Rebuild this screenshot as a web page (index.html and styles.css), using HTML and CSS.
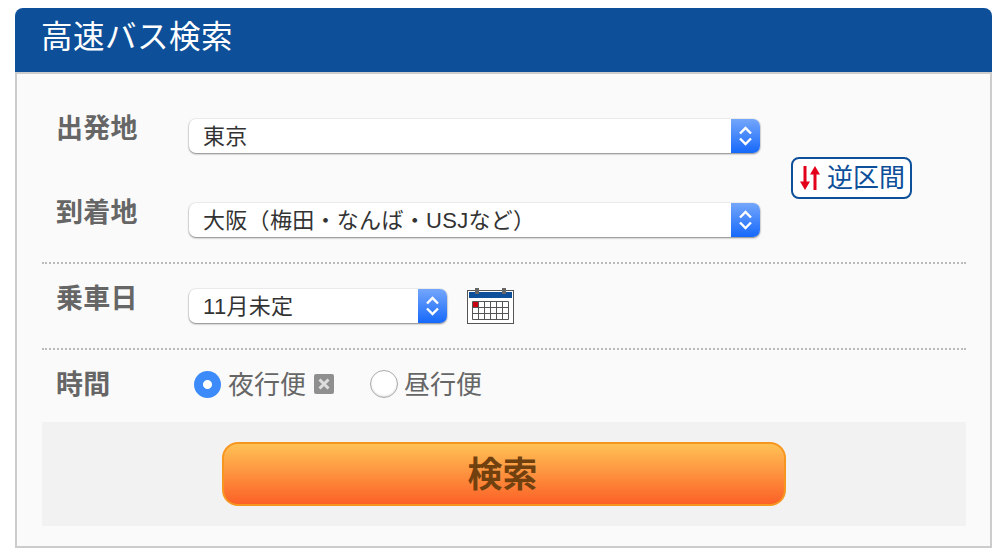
FILE: index.html
```html
<!DOCTYPE html>
<html lang="ja">

<head>
  <meta charset="UTF-8" />
  <title>高速バス検索</title>
  <link rel="stylesheet" href="styles.css">
</head>

<body>
  <div class="search">
    <h2 class="search-title">高速バス検索</h2>
    <div class="search-body">
      <div class="route">
        <div class="label">出発地</div>
        <div class="select">
          <span class="select-text">東京</span>
          <span class="select-arrow">
            <svg width="15" height="22" viewBox="0 0 15 22"><path d="M2 8.5 7.5 3 13 8.5M2 13.5 7.5 19 13 13.5" fill="none" stroke="#fff" stroke-width="2.4"/></svg>
          </span>
        </div>
        <a class="swap">
          <svg width="22" height="26" viewBox="0 0 22 26"><path d="M6 1v20M1 16.500 6 25l5-8.500zM16 25V5M11 9.500 16 1l5 8.500z" fill="#e2001a"/><path d="M6 1v20M16 25V5" stroke="#e2001a" stroke-width="3"/></svg>
          <span class="swap-text">逆区間</span>
        </a>
        <div class="label">到着地</div>
        <div class="select">
          <span class="select-text">大阪（梅田・なんば・USJなど）</span>
          <span class="select-arrow">
            <svg width="15" height="22" viewBox="0 0 15 22"><path d="M2 8.5 7.5 3 13 8.5M2 13.5 7.5 19 13 13.5" fill="none" stroke="#fff" stroke-width="2.4"/></svg>
          </span>
        </div>
      </div>

      <div class="date">
        <div class="label">乗車日</div>
        <div class="select select-short">
          <span class="select-text">11月未定</span>
          <span class="select-arrow">
            <svg width="15" height="22" viewBox="0 0 15 22"><path d="M2 8.5 7.5 3 13 8.5M2 13.5 7.5 19 13 13.5" fill="none" stroke="#fff" stroke-width="2.4"/></svg>
          </span>
        </div>
        <svg class="calendar" width="47" height="36" viewBox="0 0 47 36">
          <rect x="0.500" y="2.500" width="46" height="33" fill="#fff" stroke="#555"/>
          <rect x="2" y="4" width="43" height="6" fill="#0d4f99"/>
          <rect x="8" y="0" width="4" height="6" fill="#666"/>
          <rect x="35" y="0" width="4" height="6" fill="#666"/>
          <path d="M5.500 13.500h36v18h-36zM5.500 19.500h36M5.500 25.500h36M11.500 13.500v18M17.500 13.500v18M23.500 13.500v18M29.500 13.500v18M35.500 13.500v18" fill="none" stroke="#555"/>
          <rect x="6" y="14" width="5" height="5" fill="#c8000f"/>
        </svg>
      </div>

      <div class="time">
        <div class="label label-time">時間</div>
        <div class="radios">
          <span class="radio radio-on"></span>
          <span class="radio-text">夜行便</span>
          <span class="close-icon">
            <svg width="12" height="12" viewBox="0 0 12 12"><path d="M1.500 1.500l9 9M10.500 1.500l-9 9" stroke="#ddd" stroke-width="3"/></svg>
          </span>
          <span class="radio radio-off"></span>
          <span class="radio-text">昼行便</span>
        </div>
      </div>

      <div class="search-footer">
        <button class="search-btn">検索</button>
      </div>
    </div>
  </div>
</body>

</html>
```

FILE: styles.css
```css
* {
  box-sizing: border-box;
}

body {
  margin: 0;
  padding: 8px 14px 0 15px;
  background: #fff;
  font-family: "Liberation Sans", "Noto Sans CJK JP", sans-serif;
}

.search-title {
  margin: 0;
  height: 64px;
  padding-left: 26px;
  background: #0d4f99;
  border-radius: 8px 8px 0 0;
  color: #fff;
  font-size: 31.500px;
  font-weight: normal;
  line-height: 59px;
  letter-spacing: 0.500px;
}

.search-body {
  padding: 0 24px 20px 25px;
  background: #fafafa;
  border: 2px solid #ccc;
}

.label {
  padding-left: 14px;
  color: #666;
  font-size: 27px;
  font-weight: bold;
  line-height: 20px;
  letter-spacing: 0.300px;
}

.route {
  display: grid;
  grid-template-columns: 147px 571px auto;
  row-gap: 50px;
  padding: 45px 0 25px;
  border-bottom: 2px dotted #bbb;
}

.swap {
  grid-column: 3;
  grid-row: 1 / span 2;
  align-self: center;
  justify-self: start;
  display: flex;
  align-items: center;
  gap: 6px;
  width: 121px;
  height: 42px;
  margin-left: 31px;
  padding-left: 6px;
  background: #fff;
  border: 2px solid #0d4f99;
  border-radius: 8px;
  color: #0d4f99;
  font-size: 26px;
}

.swap-text {
  padding-bottom: 6px;
}

.select {
  display: flex;
  height: 34px;
  background: #fff;
  border-radius: 7px;
  box-shadow: 0 0 0 1px rgba(0, 0, 0, 0.04), 0 1px 2px rgba(0, 0, 0, 0.45);
  overflow: hidden;
}

.select-short {
  width: 258px;
}

.select-text {
  flex: 1;
  padding-left: 14px;
  color: #333;
  font-size: 22px;
  line-height: 35px;
  letter-spacing: 0.300px;
  white-space: nowrap;
}

.select-arrow {
  display: flex;
  align-items: center;
  justify-content: center;
  width: 29px;
  background: linear-gradient(#74a6fb, #1669fb);
}

.date {
  display: flex;
  align-items: flex-start;
  padding: 25px 0 24px;
  border-bottom: 2px dotted #bbb;
}

.date .label {
  width: 147px;
}

.calendar {
  margin: -1px 0 0 20px;
}

.time {
  display: flex;
  align-items: center;
  height: 72px;
  padding-bottom: 4px;
}

.label-time {
  width: 147px;
  padding-top: 2px;
  line-height: 34px;
}

.radios {
  display: flex;
  align-items: center;
  padding-left: 5px;
  color: #666;
  font-size: 26px;
}

.radio {
  width: 27px;
  height: 27px;
  border-radius: 50%;
}

.radio-on {
  background: radial-gradient(circle, #fff 0 4px, #3d8bfb 5px);
}

.radio-off {
  width: 28px;
  height: 28px;
  margin-left: 36px;
  background: #fff;
  border: 1px solid #aaa;
  box-shadow: inset 0 -1px 2px rgba(0, 0, 0, 0.15);
}

.radio-text {
  margin-left: 7px;
  padding-bottom: 4px;
}

.radio-off + .radio-text {
  margin-left: 6px;
}

.close-icon {
  display: flex;
  align-items: center;
  justify-content: center;
  width: 20px;
  height: 20px;
  margin-left: 8px;
  background: #8f8f8f;
  border-radius: 2px;
}

.search-footer {
  display: flex;
  justify-content: center;
  padding: 20px 0;
  background: #f2f2f2;
}

.search-btn {
  width: 564px;
  height: 64px;
  padding: 0 3px 5px 0;
  background: linear-gradient(#ffc155, #fc6127);
  border: 2px solid #f7961e;
  border-radius: 16px;
  color: #71400f;
  font-family: inherit;
  font-size: 35px;
  font-weight: bold;
  cursor: pointer;
}
```
